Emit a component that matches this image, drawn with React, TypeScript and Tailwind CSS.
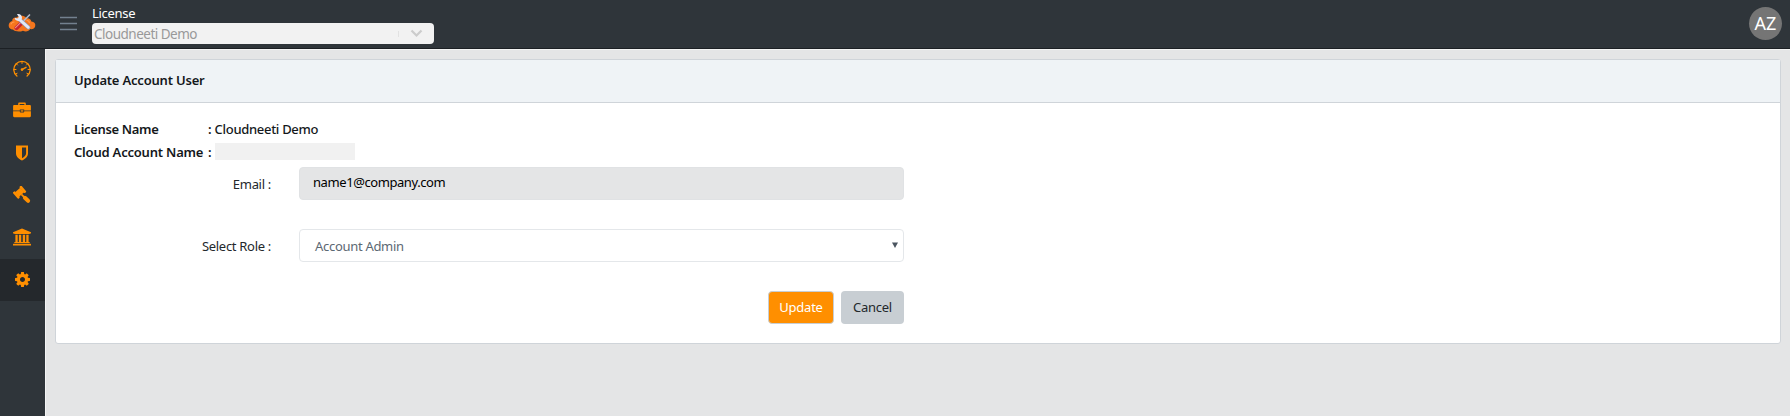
import type { ReactNode } from "react";

function Logo() {
  return (
    <svg width="28" height="20" viewBox="0 0 28 20">
      <path d="M5 16.600C1.800 16.400.3 14 .8 11.500 1.200 9.400 2.500 8.300 4.200 7.900 4.300 5.300 6.300 4.300 8.600 4.600 10 3 13 2.300 15.500 3c1.500.4 2.400 1.300 3 2.300 3-.3 4.600 1.200 4.800 3.200 3.200.2 4.500 2.300 3.900 4.700-.5 2.200-2.600 3.300-4.900 2.900-1.500 2.200-4.700 3-7.300 1.600C12.500 19 7 19 5 16.600z" fill="#f5761d" />
      <path d="M3 11c.5-1.400 1.600-1.900 3-2M19 7.500c1.500 0 2.300.9 2.300 2.200" stroke="#ff9a4d" strokeWidth="1.200" fill="none" strokeLinecap="round" />
      <path d="M21.500 2 13 10.500" stroke="#aeb8ca" strokeWidth="1.700" strokeLinecap="round" />
      <path d="M13.300 10.200 8.500 15" stroke="#c9252d" strokeWidth="4.200" strokeLinecap="round" />
      <path d="m12.300 9.800-4.800 4.800" stroke="#f08d8d" strokeWidth="1.100" strokeLinecap="round" />
      <path d="m11.500 6.500 9 8" stroke="#8d98b3" strokeWidth="4" strokeLinecap="round" />
      <path d="m11.500 6.500 8.800 7.800" stroke="#e3e9f6" strokeWidth="2.900" strokeLinecap="round" />
      <path d="M9 1.300c2.500-.8 5 .8 5 3.400 0 2.700-3.200 4-5.300 2.900C7.300 6.900 6.700 6 6.800 4.700l2.500.9 1.600-1.700z" fill="#e3e9f6" />
    </svg>
  );
}

function GaugeIcon() {
  return (
    <svg width="18" height="18" viewBox="0 0 18 18" fill="none" stroke="currentColor" strokeLinecap="round">
      <path d="M3.900 16A8.200 8.200 0 1 1 14.100 16" strokeWidth="1.300" />
      <path d="M9 1.500v2M3.400 3.900l1.100 1.100M14.600 3.900l-1.100 1.100M1 9.500h2M15 9.500h2M2.600 14l1.500-.7M15.400 14l-1.500-.7" strokeWidth="1" />
      <path d="m9 9.600 4-2.300" strokeWidth="1.500" />
      <circle cx="9" cy="9.600" r="1.300" fill="currentColor" stroke="none" />
    </svg>
  );
}

function BriefcaseIcon() {
  return (
    <svg className="mb-[2px]" width="18" height="16" viewBox="0 0 18 16" fill="currentColor">
      <path d="M5.200 3V1.600C5.200.9 5.700.5 6.300.5h5.400c.6 0 1.100.4 1.100 1.100V3h3.900c.7 0 1.200.5 1.200 1.200v4.200h-6.700V7.600H6.800v.8H.1V4.200C.1 3.500.6 3 1.300 3zm1.400 0h4.800V1.900H6.600z" />
      <path d="M.1 9.300h6.700v.5c0 .4.300.7.700.7h3c.4 0 .7-.3.700-.7v-.5h6.700V14c0 .7-.5 1.200-1.200 1.200H1.300C.6 15.200.1 14.700.1 14z" />
      <path d="M7.700 8.300h2.600v1.300H7.700z" />
    </svg>
  );
}

function ShieldIcon() {
  return (
    <svg width="14" height="16" viewBox="0 0 14 16" fill="currentColor" fillRule="evenodd">
      <path d="M1 .5h12v7.700c0 3.500-3 5.800-6 7.300-3-1.500-6-3.800-6-7.300zM7 2.400v10.900c2.300-1.300 4.100-2.800 4.100-5V2.400z" />
    </svg>
  );
}

function GavelIcon() {
  return (
    <svg width="18" height="18" viewBox="0 0 18 18" fill="currentColor">
      <g transform="translate(6.600 6.200) rotate(-41)">
        <rect x="-3.400" y="-3" width="6.800" height="6" />
        <rect x="-5.600" y="-4.200" width="2.600" height="8.400" rx="1" />
        <rect x="3" y="-4.200" width="2.600" height="8.400" rx="1" />
      </g>
      <path d="m8.400 8.300 3.500 3.500" stroke="currentColor" strokeWidth="1.700" />
      <path d="m11.900 11.800 3.200 3" stroke="currentColor" strokeWidth="4" strokeLinecap="round" />
    </svg>
  );
}

function BankIcon() {
  return (
    <svg className="-ml-px" width="20" height="18" viewBox="0 0 20 18" fill="currentColor">
      <path d="M10 .5 19 4.300v1.200h-1.200c0 .4-.3.600-.6.600H2.800c-.3 0-.6-.2-.6-.6H1V4.300z" />
      <path d="M3.400 6.700h2.300v7.200h1.200V6.700h2.300v7.200h1.600V6.700h2.300v7.200h1.200V6.700h2.300v7.200h.6c.3 0 .6.300.6.600v.6H2.200v-.6c0-.3.300-.6.600-.6h.6z" />
      <path d="M1.600 15.700h16.800c.3 0 .6.300.6.600v1.200H1v-1.200c0-.3.300-.6.600-.6z" />
    </svg>
  );
}

function CogIcon() {
  return (
    <svg width="15" height="15" viewBox="0 0 1536 1536" fill="currentColor">
      <path d="M1024 768q0-106-75-181t-181-75-181 75-75 181 75 181 181 75 181-75 75-181zm512-109v222q0 12-8 23t-20 13l-185 28q-19 54-39 91 35 50 107 138 10 12 10 25t-9 23q-27 37-99 108t-94 71q-12 0-26-9l-138-108q-44 23-91 38-16 136-29 186-7 28-36 28H657q-14 0-24.500-8.500T621 1506l-28-184q-49-16-90-37l-141 107q-10 9-25 9-14 0-25-11-126-114-165-168-7-10-7-23 0-12 8-23 15-21 51-66.500t54-70.500q-27-50-41-99L29 913q-13-2-21-12.500T0 877V655q0-12 8-23t19-13l186-28q14-46 39-92-40-57-107-138-10-12-10-24 0-10 9-23 26-36 98.500-107.500T337 135q13 0 26 10l138 107q44-23 91-38 16-136 29-186 7-28 36-28h222q14 0 24.500 8.500T915 30l28 184q49 16 90 37l142-107q9-9 24-9 13 0 25 10 129 119 165 170 7 8 7 22 0 12-8 23-15 21-51 66.500t-54 70.500q26 50 41 98l183 28q13 2 21 12.500t8 23.500z" />
    </svg>
  );
}

function NavItem({ active, children }: { active?: boolean; children: ReactNode }) {
  return (
    <a className={`flex h-[42px] w-[45px] items-center justify-center pr-px pb-[2px] text-[#ff8f00] ${active ? "bg-[#24282c]" : ""}`}>
      {children}
    </a>
  );
}

function Header() {
  return (
    <header className="flex h-[49px] items-start border-b border-[#1c2024] bg-[#2f353a]">
      <div className="flex w-[45px] justify-center pt-[13px] pr-px"><Logo /></div>
      <svg className="mt-[16px] ml-[15px]" width="17" height="15" viewBox="0 0 17 15" stroke="#73818f" strokeWidth="1.300">
        <path d="M0 1.500h17M0 7.500h17M0 13.500h17" />
      </svg>
      <div className="ml-[15px] w-[342px] pt-[5px]">
        <div className="h-[18px] text-[13px] leading-[16px] tracking-[-0.3px] text-white">License</div>
        <div className="flex h-[21px] items-center rounded-[4px] bg-[#f2f2f2] pr-[11px] pl-[2px] text-[#999999]">
          <span className="grow pt-[3px] text-[13.500px] leading-none tracking-[-0.5px]">Cloudneeti Demo</span>
          <span className="mr-[11px] h-[6px] w-px bg-[#e2e2e2]" />
          <svg width="13" height="9" viewBox="0 0 13 9" fill="none" stroke="#cccccc" strokeWidth="2.200">
            <path d="m1.500 1.500 5 5 5-5" />
          </svg>
        </div>
      </div>
      <div className="mt-[7px] mr-[8px] ml-auto flex size-[33px] items-center justify-center rounded-full bg-[#757575] text-[18px] text-white">AZ</div>
    </header>
  );
}

export default function App() {
  return (
    <div className="flex h-[416px] w-[1790px] flex-col overflow-hidden bg-[#e4e5e6] text-[13px] text-[#23282c] [font-family:'Noto_Sans','Open_Sans',sans-serif]">
      <Header />
      <div className="flex grow">
        <nav className="w-[45px] bg-[#2f353a]">
          <NavItem><GaugeIcon /></NavItem>
          <NavItem><BriefcaseIcon /></NavItem>
          <NavItem><ShieldIcon /></NavItem>
          <NavItem><GavelIcon /></NavItem>
          <NavItem><BankIcon /></NavItem>
          <NavItem active><CogIcon /></NavItem>
        </nav>
        <main className="grow border-t border-l border-[#f4f4f4] pt-[9px] pr-[9px] pl-[9px]">
          <section className="h-[285px] rounded-[3px] border border-[#cfd4d9] bg-white">
            <h1 className="flex h-[43px] items-center border-b border-[#cfd4d9] bg-[#eff3f6] pl-[18px] font-semibold text-[#14181b]">
              <span className="tracking-[-0.2px]">Update Account User</span>
            </h1>
            <div className="pt-[15px] pl-[18px] font-semibold text-[#14181b]">
              <div className="flex h-[23px] items-center">
                <span className="w-[134px] tracking-[-0.35px]">License Name</span>
                <span className="mr-[3px]">:</span>
                <span className="font-medium tracking-[-0.3px]">Cloudneeti Demo</span>
              </div>
              <div className="flex h-[23px] items-center">
                <span className="w-[134px] tracking-[-0.2px]">Cloud Account Name</span>
                <span className="mr-[3px]">:</span>
                <span className="mb-[2px] h-[17px] w-[140px] bg-[#f1f1f1]" />
              </div>
            </div>
            <form className="w-[848px]">
              <div className="mt-[3px] flex h-[33px] items-center">
                <label className="w-[215px] pt-[2px] text-right tracking-[-0.3px]">Email :</label>
                <div className="ml-[28px] flex h-[33px] grow items-center rounded-[4px] border border-[#e0e2e4] bg-[#e4e5e6] pb-px pl-[13px] tracking-[-0.42px] text-black">name1@company.com</div>
              </div>
              <div className="mt-[29px] flex h-[33px] items-center">
                <label className="w-[215px] pt-[3px] text-right tracking-[-0.3px]">Select Role :</label>
                <div className="ml-[28px] flex h-[33px] grow items-center justify-between rounded-[4px] border border-[#e4e7ea] pr-[5px] pl-[15px] text-[#5c6873]">
                  <span className="pt-[2px] tracking-[-0.3px]">Account Admin</span>
                  <svg className="mb-[1px]" width="6" height="6" viewBox="0 0 6 6" fill="#4b5560"><path d="M0 .5h6L3 6z" /></svg>
                </div>
              </div>
              <div className="mt-[29px] flex h-[33px] justify-end gap-[7px]">
                <button type="button" className="w-[66px] rounded-[4px] border border-[#c8ced3] bg-[#ff8f00] pt-px tracking-[-0.25px] text-white">Update</button>
                <button type="button" className="w-[63px] rounded-[4px] bg-[#c8ced3] pt-px tracking-[-0.25px] text-[#23282c]">Cancel</button>
              </div>
            </form>
          </section>
        </main>
      </div>
    </div>
  );
}
